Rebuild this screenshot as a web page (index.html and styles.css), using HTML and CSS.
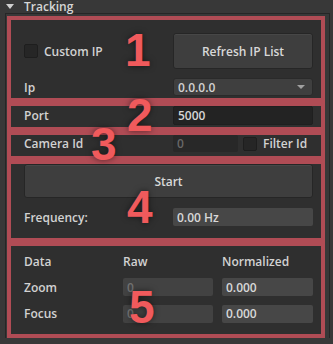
FILE: index.html
```html
<!DOCTYPE html>
<html lang="en">
<head>
  <meta charset="UTF-8" />
  <title>Tracking</title>
  <link rel="stylesheet" href="styles.css">
</head>
<body>
  <div class="inspector">
    <div class="foldout"><span class="caret"></span><span class="title">Tracking</span></div>

    <div class="frame">
      <section class="group g-ip">
        <div class="row">
          <label class="toggle"><span class="check"></span>Custom IP</label>
          <button class="btn btn-refresh">Refresh IP List</button>
        </div>
        <div class="row row-ip">
          <span class="label">Ip</span>
          <div class="dropdown"><span>0.0.0.0</span><span class="arrow"></span></div>
        </div>
      </section>

      <section class="group g-port">
        <div class="row">
          <span class="label">Port</span>
          <div class="field field-dark">5000</div>
        </div>
      </section>

      <section class="group g-camera">
        <div class="row">
          <span class="label">Camera Id</span>
          <div class="camera-line">
            <div class="field field-off">0</div>
            <label class="toggle"><span class="check"></span>Filter Id</label>
          </div>
        </div>
      </section>

      <section class="group g-start">
        <button class="btn btn-start">Start</button>
        <div class="row">
          <span class="label">Frequency:</span>
          <div class="field field-value">0.00 Hz</div>
        </div>
      </section>

      <section class="group g-data">
        <div class="table">
          <span class="label">Data</span>
          <span class="label">Raw</span>
          <span class="label">Normalized</span>

          <span class="label">Zoom</span>
          <div class="field field-value cell raw">0</div>
          <div class="field field-value cell">0.000</div>

          <span class="label">Focus</span>
          <div class="field field-value cell raw">0</div>
          <div class="field field-value cell">0.000</div>
        </div>
      </section>
    </div>

    <!-- annotation numbers -->
    <span class="mark mark-1">1</span>
    <span class="mark mark-2">2</span>
    <span class="mark mark-3">3</span>
    <span class="mark mark-4">4</span>
    <span class="mark mark-5">5</span>
  </div>
</body>
</html>
```

FILE: styles.css
```css
body {
  margin: 0;
  background: #383838;
  color: #d2d2d2;
  font-family: "Open Sans", "Noto Sans", sans-serif;
  font-size: 12px;
  font-weight: 600;
  width: 333px;
  height: 344px;
  overflow: hidden;
}

.inspector {
  position: relative;
  height: 344px;
}

.foldout {
  height: 13px;
  display: flex;
  align-items: flex-end;
  padding-left: 6px;
}

.caret {
  width: 0;
  height: 0;
  border-left: 4px solid transparent;
  border-right: 4px solid transparent;
  border-top: 5px solid #d0d0d0;
  margin: 0 10px 4px 0;
}

.title {
  font-size: 12px;
  color: #d6d6d6;
  line-height: 13px;
}

.frame {
  margin: 0 3px 0 5px;
  border: 1px solid #262626;
  border-bottom: none;
  padding: 2px 4px 0 1px;
}

.group {
  border: 4px solid #b04c55;
  background: #2f2f2f;
  padding: 0 8px 0 13px;
}

.row {
  display: grid;
  grid-template-columns: 149px 140px;
  align-items: center;
}

.g-ip { padding-top: 13px; padding-bottom: 2px; }
.g-ip .row-ip { margin-top: 9px; }
.g-port { padding-top: 0; padding-bottom: 2px; }
.g-camera { padding-top: 0; padding-bottom: 4px; }
.g-start { padding-top: 0; padding-bottom: 12px; }
.g-start .row { margin-top: 10px; }
.g-data { padding-top: 7px; padding-bottom: 13px; }

.toggle {
  display: flex;
  align-items: center;
  gap: 6px;
}

.check {
  width: 12px;
  height: 12px;
  background: #262626;
  border: 1px solid #1e1e1e;
  border-radius: 2px;
}

.btn {
  font: inherit;
  color: #d8d8d8;
  background: #3e3e3e;
  border: 1px solid #262626;
  border-radius: 3px;
  box-shadow: inset 0 1px 0 rgba(255, 255, 255, 0.05);
  padding: 0;
}

.btn-refresh { height: 36px; }
.btn-start { height: 34px; width: 100%; display: block; }

.dropdown {
  height: 18px;
  box-sizing: border-box;
  background: #3f3f3f;
  border: 1px solid #2a2a2a;
  border-radius: 3px;
  display: flex;
  align-items: center;
  justify-content: space-between;
  padding: 0 7px 0 4px;
}

.arrow {
  width: 0;
  height: 0;
  border-left: 4px solid transparent;
  border-right: 4px solid transparent;
  border-top: 4px solid #a0a0a0;
}

.field {
  height: 19px;
  box-sizing: border-box;
  border-radius: 2px;
  display: flex;
  align-items: center;
  padding-left: 4px;
}

.field-dark {
  background: #232323;
  border: 1px solid #1f1f1f;
  color: #d6d6d6;
}

.camera-line {
  display: flex;
  align-items: center;
}

.field-off {
  width: 65px;
  height: 17px;
  background: #282828;
  color: #676767;
}

.camera-line .toggle {
  margin-left: 5px;
}

.field-value {
  height: 18px;
  background: #474747;
  color: #d8d8d8;
}

.table {
  display: grid;
  grid-template-columns: 99px 99px 91px;
  grid-auto-rows: 18px;
  row-gap: 7px;
  align-items: center;
}

.table .cell:nth-child(3n+2) { width: 90px; }
.table .raw { color: #727272; background: #424242; }
.table > :nth-child(n+7) { margin-top: 3px; }
.table > :nth-child(-n+3) { line-height: 18px; }

.mark {
  position: absolute;
  font-family: "Liberation Sans", Arial, sans-serif;
  font-weight: 700;
  font-size: 46px;
  line-height: 46px;
  color: #f05a5c;
  text-shadow: 0 0 6px rgba(0, 0, 0, 0.55);
}

.mark-1 { left: 125px; top: 27px; }
.mark-2 { left: 127px; top: 92px; }
.mark-3 { left: 91px; top: 121px; }
.mark-4 { left: 127px; top: 184px; }
.mark-5 { left: 129px; top: 284px; }
```
